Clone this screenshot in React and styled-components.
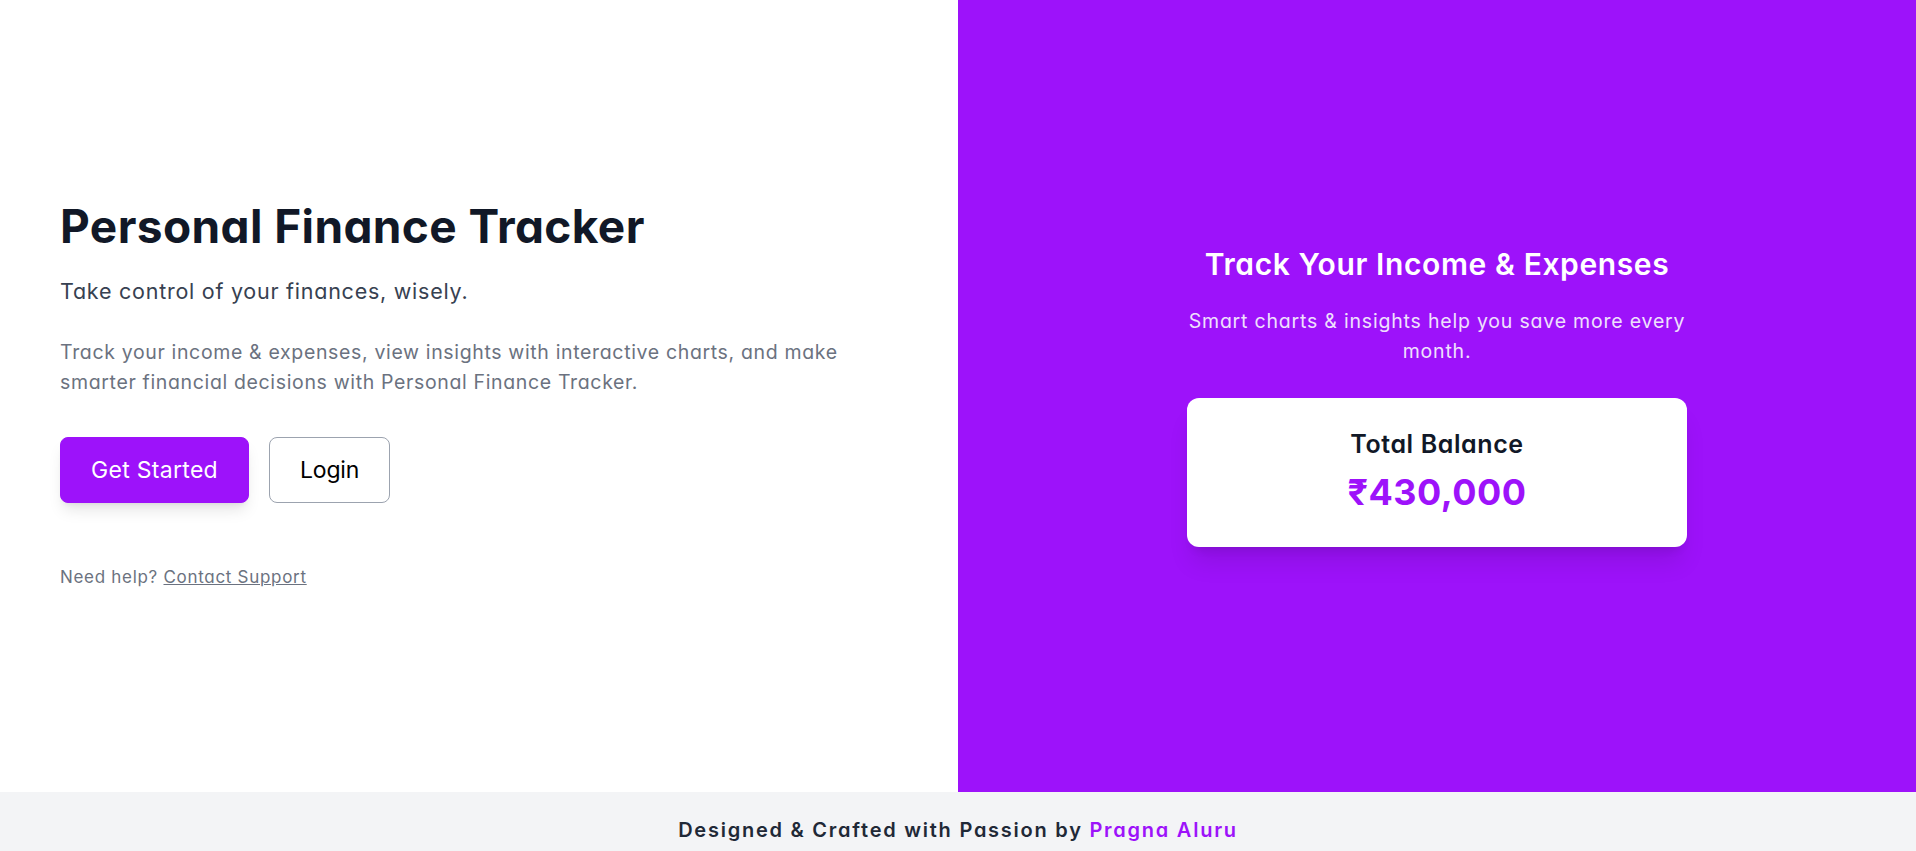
import styled, { createGlobalStyle } from "styled-components";

const purple = "#9d12fa";

const GlobalStyle = createGlobalStyle`
  * {
    box-sizing: border-box;
  }

  body {
    margin: 0;
    font-family: Inter, "Noto Sans", sans-serif;
    font-feature-settings: "cv11";
    -webkit-font-smoothing: antialiased;
  }
`;

const Hero = styled.section`
  display: grid;
  grid-template-columns: 1fr 1fr;
  height: 792px;
`;

const Intro = styled.div`
  display: flex;
  flex-direction: column;
  justify-content: center;
  padding: 0 60px;
  background: #ffffff;
`;

const Title = styled.h1`
  margin: 0;
  font-size: 46px;
  line-height: 1;
  font-weight: 700;
  letter-spacing: 0.4px;
  color: #111827;
`;

const Tagline = styled.p`
  margin: 28px 0 0;
  font-size: 21.5px;
  line-height: 28px;
  letter-spacing: 0.75px;
  color: #374151;
`;

const Blurb = styled.p`
  margin: 32px 0 0;
  max-width: 800px;
  font-size: 19.5px;
  line-height: 30px;
  letter-spacing: 0.65px;
  color: #6b7280;
`;

const Actions = styled.div`
  display: flex;
  gap: 20px;
  margin-top: 40px;
`;

const Button = styled.button`
  padding: 16px 30px;
  border-radius: 8px;
  font-family: inherit;
  font-size: 23px;
  line-height: 32px;
  letter-spacing: ${(p) => (p.$primary ? "0.3px" : "-0.2px")};
  cursor: pointer;
  border: 1px solid ${(p) => (p.$primary ? purple : "#9ca3af")};
  background: ${(p) => (p.$primary ? purple : "#ffffff")};
  color: ${(p) => (p.$primary ? "#ffffff" : "#000000")};
  box-shadow: ${(p) =>
    p.$primary
      ? "0 10px 15px -3px rgba(0,0,0,0.1), 0 4px 6px -4px rgba(0,0,0,0.1)"
      : "none"};
`;

const Help = styled.p`
  margin: 62px 0 0;
  font-size: 17px;
  line-height: 24px;
  letter-spacing: 0.7px;
  color: #6b7280;

  a {
    color: #6b7280;
    text-decoration: underline;
  }
`;

const Showcase = styled.div`
  display: flex;
  flex-direction: column;
  align-items: center;
  justify-content: center;
  background: ${purple};
  color: #ffffff;
  text-align: center;
`;

const ShowTitle = styled.h2`
  margin: 0;
  font-size: 30px;
  line-height: 36px;
  font-weight: 600;
  letter-spacing: 0.6px;
`;

const ShowText = styled.p`
  margin: 24px 0 0;
  max-width: 512px;
  font-size: 19.5px;
  line-height: 30px;
  letter-spacing: 0.8px;
  color: #efe0fd;
`;

const BalanceCard = styled.div`
  width: 500px;
  margin-top: 32px;
  padding: 30px 32px 35px;
  border-radius: 12px;
  background: #ffffff;
  box-shadow: 0 20px 25px -5px rgba(0, 0, 0, 0.1),
    0 8px 10px -6px rgba(0, 0, 0, 0.1);
`;

const CardLabel = styled.h3`
  margin: 0;
  font-size: 25px;
  line-height: 32px;
  font-weight: 600;
  letter-spacing: 0.6px;
  color: #111827;
`;

const Amount = styled.p`
  margin: 12px 0 0;
  font-size: 36px;
  line-height: 40px;
  font-weight: 700;
  letter-spacing: 0.5px;
  color: ${purple};
`;

const Footer = styled.footer`
  padding: 24px;
  background: #f3f4f6;
  text-align: center;
  font-size: 20px;
  line-height: 28px;
  font-weight: 600;
  letter-spacing: 1.75px;
  color: #1f2937;

  span {
    color: ${purple};
  }
`;

export default function App() {
  return (
    <>
      <GlobalStyle />
      <Hero>
        <Intro>
          <Title>Personal Finance Tracker</Title>
          <Tagline>Take control of your finances, wisely.</Tagline>
          <Blurb>
            Track your income &amp; expenses, view insights with interactive
            charts, and make smarter financial decisions with Personal Finance
            Tracker.
          </Blurb>
          <Actions>
            <Button $primary>Get Started</Button>
            <Button>Login</Button>
          </Actions>
          <Help>
            Need help? <a href="#support">Contact Support</a>
          </Help>
        </Intro>
        <Showcase>
          <ShowTitle>Track Your Income &amp; Expenses</ShowTitle>
          <ShowText>
            Smart charts &amp; insights help you save more every month.
          </ShowText>
          <BalanceCard>
            <CardLabel>Total Balance</CardLabel>
            <Amount>₹430,000</Amount>
          </BalanceCard>
        </Showcase>
      </Hero>
      <Footer>
        Designed &amp; Crafted with Passion by <span>Pragna Aluru</span>
      </Footer>
    </>
  );
}
